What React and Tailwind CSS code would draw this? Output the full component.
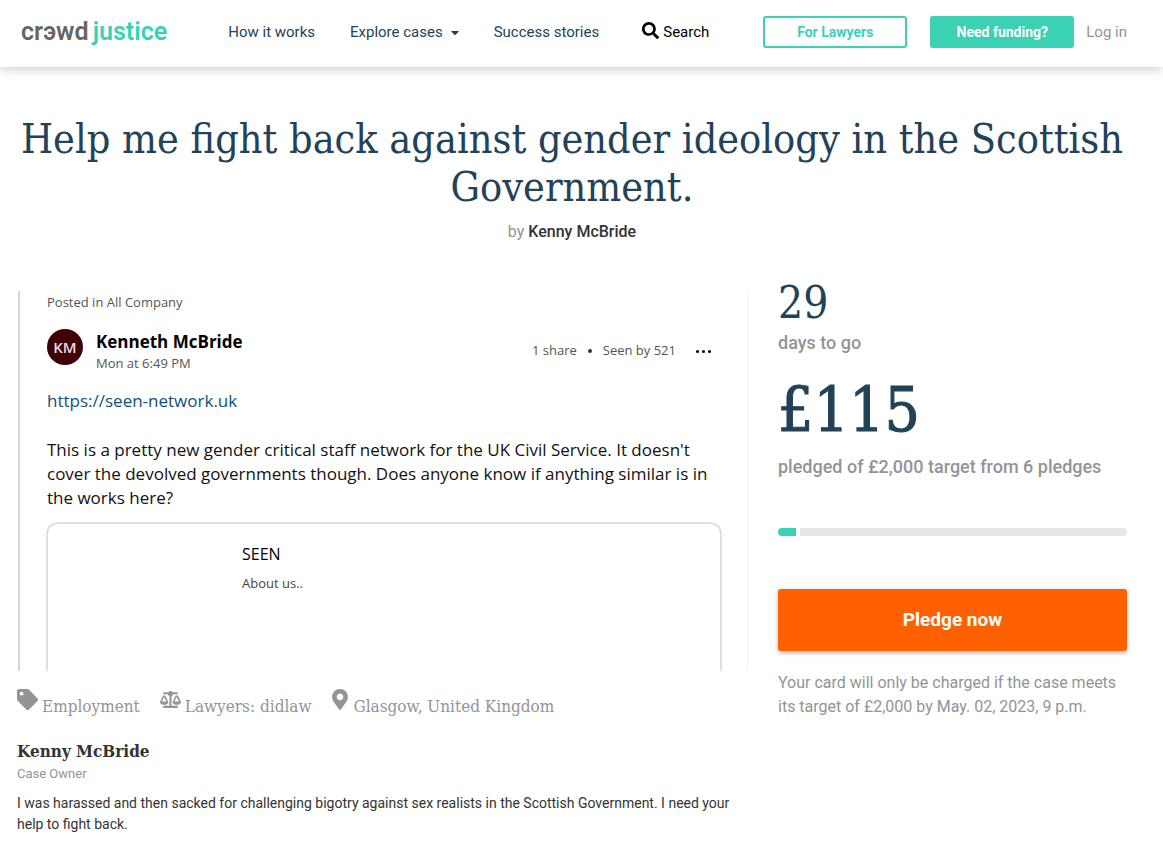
import React from 'react';
import { FaBalanceScale, FaCaretDown, FaMapMarkerAlt, FaSearch, FaTag } from 'react-icons/fa';

const pledged = 115;
const target = 2000;

const Header = () => (
  <header className="bg-white shadow-[0_2px_10px_rgba(0,0,0,0.2)]">
    <div className="flex items-center h-[67px] pl-[21px] pr-9 pb-1 text-[15px] text-[#234258]">
      <a href="#" aria-label="crowdjustice" className="text-[25px] leading-none font-semibold text-[#666]">
        <span>crэwd</span><span className="ml-1 text-[#3bd1b4]">justice</span>
      </a>
      <nav className="flex flex-1 items-center ml-[61px] pt-[2px]">
        <a href="#" className="mr-[35px]">How it works</a>
        <button type="button" className="flex items-center gap-2 mr-[35px]">
          Explore cases <FaCaretDown className="w-2" />
        </button>
        <a href="#" className="mr-[43px]">Success stories</a>
        <a href="#" className="flex items-center gap-1 text-black">
          <FaSearch className="size-[17px] mb-1" /> Search
        </a>
      </nav>
      <a href="#" className="w-36 h-8 flex items-center justify-center rounded-[3px] border-2 border-[#3bd1b4] text-sm font-bold text-[#3bd1b4]">For Lawyers</a>
      <a href="#" className="w-36 h-8 ml-[23px] flex items-center justify-center rounded-[3px] bg-[#3bd1b4] text-sm font-bold text-white">Need funding?</a>
      <a href="#" className="ml-3 pt-[2px] text-[#929497]">Log in</a>
    </div>
  </header>
);

const PostPreview = () => (
  <div className="h-[380px] ml-px overflow-hidden border-l-2 border-r border-l-[#d6d6d6] border-r-[#f3f3f3] pl-[26px] pr-[25px] font-['Open_Sans',sans-serif] text-[#111]">
    <div className="px-px">
      <div className="pt-px text-[13px] leading-5 text-[#555]">Posted in All Company</div>
      <div className="flex items-center mt-[17px]">
        <div className="size-9 mb-2 rounded-full bg-[#3f0006] flex items-center justify-center text-[15px] font-semibold text-[#eddcdf]">KM</div>
        <div className="ml-[13px] flex-1">
          <div className="text-[17px] leading-6 font-bold text-black">Kenneth McBride</div>
          <div className="text-[13px] leading-[18px] text-[#555]">Mon at 6:49 PM</div>
        </div>
        <div className="flex items-center text-[13px] text-[#555] pr-[10px]">
          <span>1 share</span>
          <span className="size-1 mx-[11px] rounded-full bg-[#333]" />
          <span>Seen by 521</span>
          <button type="button" aria-label="More" className="flex gap-[3px] ml-5">
            <span className="size-[3px] rounded-full bg-black" />
            <span className="size-[3px] rounded-full bg-black" />
            <span className="size-[3px] rounded-full bg-black" />
          </button>
        </div>
      </div>
      <a href="#" className="block mt-4 text-[17px] leading-6 text-[#10507c]">https://seen-network.uk</a>
      <p className="mt-[25px] text-[17px] leading-6">
        This is a pretty new gender critical staff network for the UK Civil Service. It doesn't cover the devolved governments though. Does anyone know if anything similar is in the works here?
      </p>
    </div>
    <div className="mt-3 h-[200px] rounded-xl border-2 border-[#e0e0e0] pl-[194px] pt-[18px]">
      <div className="text-base leading-6 text-black">SEEN</div>
      <div className="mt-[7px] text-[13px] leading-5 text-[#444]">About us..</div>
    </div>
  </div>
);

const App = () => {
  return (
    <div className="min-h-screen bg-white font-[Roboto,sans-serif] text-[#333]">
      <Header />
      <main className="pl-[17px] pr-9">
        <h1 className="mt-12 text-center font-['Roboto_Slab','DejaVu_Serif_Condensed','DejaVu_Serif',serif] text-[41px] leading-12 text-[#234258]">
          Help me fight back against gender ideology in the Scottish Government.
        </h1>
        <p className="mt-[9px] text-center text-base leading-6 text-[#929497]">
          by <a href="#" className="font-medium text-[#333]">Kenny McBride</a>
        </p>

        <div className="flex mt-[47px] gap-[30px]">
          <section className="flex-1 min-w-0">
            <PostPreview />
            <ul className="flex mt-4 gap-5 font-['Roboto_Slab','DejaVu_Serif_Condensed','DejaVu_Serif',serif] text-[17px] leading-8 text-[#929497]">
              <li className="flex gap-1"><FaTag className="size-[21px] mt-[2px]" /><span className="pt-[3px]">Employment</span></li>
              <li className="flex gap-1"><FaBalanceScale className="w-[21px] h-[17px] mt-1" /><span className="pt-[3px]">Lawyers: didlaw</span></li>
              <li className="flex gap-[6px]"><FaMapMarkerAlt className="w-4 h-[21px] mt-[2px]" /><span className="pt-[3px]">Glasgow, United Kingdom</span></li>
            </ul>
            <h2 className="mt-[17px] font-['Roboto_Slab','DejaVu_Serif_Condensed','DejaVu_Serif',serif] text-[17px] leading-6 font-bold">Kenny McBride</h2>
            <div className="mt-px text-[13px] leading-5 text-[#929497]">Case Owner</div>
            <p className="mt-[9px] text-sm leading-[21px]">
              I was harassed and then sacked for challenging bigotry against sex realists in the Scottish Government. I need your help to fight back.
            </p>
          </section>

          <aside className="w-[349px] shrink-0 -mt-3 text-[#929497]">
            <div className="font-['Roboto_Slab','DejaVu_Serif_Condensed','DejaVu_Serif',serif] text-[44px] leading-12 text-[#234258]">29</div>
            <div className="mt-1 text-lg leading-6 font-medium">days to go</div>
            <div className="mt-[15px] font-['Roboto_Slab','DejaVu_Serif_Condensed','DejaVu_Serif',serif] text-[62px] leading-[80px] text-[#234258] [-webkit-text-stroke:1px_#234258]">£{pledged}</div>
            <div className="mt-[5px] text-lg leading-6 font-medium">pledged of £{target.toLocaleString('en-GB')} target from 6 pledges</div>
            <div className="flex gap-1 mt-[49px] h-2">
              <div className="rounded-l-full bg-[#3bd1b4]" style={{ width: `${(pledged / target) * 92}%` }} />
              <div className="flex-1 rounded-r-full bg-[#e6e7e8]" />
            </div>
            <button type="button" className="w-full h-[62px] mt-[53px] rounded-[3px] bg-[#ff6000] text-[19px] font-bold text-white shadow-[0_2px_4px_rgba(0,0,0,0.3)]">Pledge now</button>
            <p className="mt-5 text-base leading-6">
              Your card will only be charged if the case meets its target of £2,000 by May. 02, 2023, 9 p.m.
            </p>
          </aside>
        </div>
      </main>
    </div>
  );
};

export default App;
